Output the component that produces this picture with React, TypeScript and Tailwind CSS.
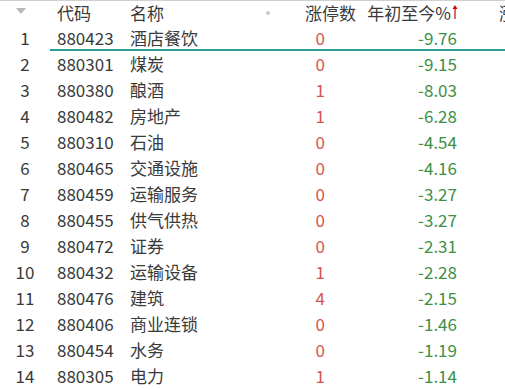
import React from 'react';

type Row = { code: string; name: string; zt: number; ytd: string };

const rows: Row[] = [
  { code: '880423', name: '酒店餐饮', zt: 0, ytd: '-9.76' },
  { code: '880301', name: '煤炭', zt: 0, ytd: '-9.15' },
  { code: '880380', name: '酿酒', zt: 1, ytd: '-8.03' },
  { code: '880482', name: '房地产', zt: 1, ytd: '-6.28' },
  { code: '880310', name: '石油', zt: 0, ytd: '-4.54' },
  { code: '880465', name: '交通设施', zt: 0, ytd: '-4.16' },
  { code: '880459', name: '运输服务', zt: 0, ytd: '-3.27' },
  { code: '880455', name: '供气供热', zt: 0, ytd: '-3.27' },
  { code: '880472', name: '证券', zt: 0, ytd: '-2.31' },
  { code: '880432', name: '运输设备', zt: 1, ytd: '-2.28' },
  { code: '880476', name: '建筑', zt: 4, ytd: '-2.15' },
  { code: '880406', name: '商业连锁', zt: 0, ytd: '-1.46' },
  { code: '880454', name: '水务', zt: 0, ytd: '-1.19' },
  { code: '880305', name: '电力', zt: 1, ytd: '-1.14' },
];

const font = { fontFamily: '"Segoe UI", "Noto Sans CJK SC", "Noto Sans", sans-serif' };

const App: React.FC = () => {
  return (
    <div
      className="w-[505px] h-[390px] overflow-hidden bg-white text-[17px] text-[#3a3a3a] border-t border-[#d0d0d0]"
      style={font}
    >
      {/* header */}
      <div className="flex h-[23px] items-center leading-none">
        <div className="w-[50px] shrink-0 flex justify-center">
          <svg width="10" height="6" viewBox="0 0 10 6" className="ml-[-8px] mt-[-4px]">
            <path d="M0 0 L10 0 L5 6 Z" fill="#b8b8b8" />
          </svg>
        </div>
        <div className="w-[73px] shrink-0 pl-[7px]">代码</div>
        <div className="w-[137px] shrink-0 pl-[7px]">名称</div>
        <div className="w-[10px] shrink-0 flex items-center">
          <span className="w-[4px] h-[4px] rounded-full bg-[#c8c8c8] ml-[6px]" />
        </div>
        <div className="w-[86px] shrink-0 text-right">涨停数</div>
        <div className="w-[102px] shrink-0 flex items-center justify-end">
          <span>年初至今%</span>
          <svg width="6" height="16" viewBox="0 0 6 16" className="ml-[1px] mt-[-2px]">
            <path d="M3 1 L0.5 5 L2.4 5 L2.4 15 L3.6 15 L3.6 5 L5.5 5 Z" fill="#d40000" />
          </svg>
        </div>
        <div className="shrink-0 pl-[41px] whitespace-nowrap">涨幅</div>
      </div>
      {/* rows */}
      {rows.map((r, i) => (
        <div key={r.code} className="flex h-[26px] items-center leading-none relative">
          <div className="w-[50px] shrink-0 text-center">{i + 1}</div>
          <div className="w-[73px] shrink-0 pl-[7px]">{r.code}</div>
          <div className="w-[137px] shrink-0 pl-[7px] whitespace-nowrap">{r.name}</div>
          <div className="w-[10px] shrink-0" />
          <div className="w-[55px] shrink-0 text-right text-[#d9534f]">{r.zt}</div>
          <div className="w-[132px] shrink-0 text-right text-[#3d8f45]">{r.ytd}</div>
          {i === 0 && (
            <div className="absolute left-[50px] right-0 bottom-[-1px] h-[2px] bg-[#2a9d96]" />
          )}
        </div>
      ))}
    </div>
  );
};

export default App;
